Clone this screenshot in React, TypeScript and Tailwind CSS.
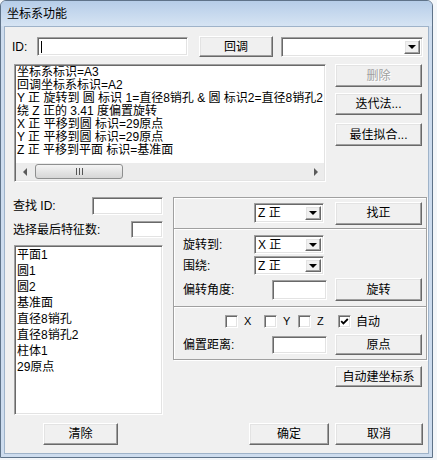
import React from 'react'

// classic 3D borders
const raised =
  'bg-[#f0f0f0] border border-t-white border-l-white border-r-[#696969] border-b-[#696969] shadow-[inset_-1px_-1px_0_#a0a0a0,inset_1px_1px_0_#e3e3e3]'
const sunken =
  'bg-white border border-t-[#a0a0a0] border-l-[#a0a0a0] border-r-white border-b-white shadow-[inset_1px_1px_0_#696969,inset_-1px_-1px_0_#e3e3e3]'

function Button({ className = '', disabled = false, children }: { className?: string; disabled?: boolean; children: React.ReactNode }) {
  return (
    <button
      type="button"
      className={`${raised} flex items-center justify-center text-[12px] leading-none shrink-0 ${
        disabled ? 'text-[#a0a0a0] [text-shadow:1px_1px_0_#ffffff]' : 'text-black'
      } ${className}`}
    >
      {children}
    </button>
  )
}

function Field({ className = '', caret = false }: { className?: string; caret?: boolean }) {
  return (
    <div className={`${sunken} shrink-0 flex items-start ${className}`}>
      {caret && <div className="ml-[3px] mt-[3px] w-[1px] h-[12px] bg-black" />}
    </div>
  )
}

function Combo({ className = '', value = '' }: { className?: string; value?: string }) {
  return (
    <div className={`${sunken} shrink-0 flex p-[2px] ${className}`}>
      <div className="flex-1 flex items-center pl-[1px] text-[12px] leading-none overflow-hidden whitespace-nowrap">{value}</div>
      <div className={`${raised} w-[16px] flex items-center justify-center`}>
        <div className="w-0 h-0 border-x-[4px] border-x-transparent border-t-[4px] border-t-black" />
      </div>
    </div>
  )
}

function Check({ checked = false, label, className = '' }: { checked?: boolean; label: string; className?: string }) {
  return (
    <div className={`flex items-center shrink-0 ${className}`}>
      <div className={`${sunken} w-[13px] h-[13px] flex items-center justify-center`}>
        {checked && (
          <svg width="9" height="9" viewBox="0 0 9 9">
            <path d="M1.2 4.2 L3.4 6.4 L7.8 2" fill="none" stroke="black" strokeWidth="1.8" />
          </svg>
        )}
      </div>
      <span className="ml-[6px] text-[11px] leading-none">{label}</span>
    </div>
  )
}

const logLines = [
  '坐标系标识=A3',
  '回调坐标系标识=A2',
  'Y 正 旋转到 圆 标识 1=直径8销孔 & 圆 标识2=直径8销孔2',
  '绕 Z 正的 3.41 度偏置旋转',
  'X 正 平移到圆 标识=29原点',
  'Y 正 平移到圆 标识=29原点',
  'Z 正 平移到平面 标识=基准面',
]

const features = ['平面1', '圆1', '圆2', '基准面', '直径8销孔', '直径8销孔2', '柱体1', '29原点']

export default function App() {
  return (
    <div className="w-[437px] h-[460px] bg-[#f3f6f9] text-black font-['Liberation_Sans','Noto_Sans_CJK_SC',sans-serif]">
      <div className="w-[433px] h-[458px] border border-[#5f7389] rounded-t-[6px] bg-[#cddcee] flex flex-col px-[3px] pb-[3px] overflow-hidden">
        {/* Title bar */}
        <div className="h-[25px] -mx-[3px] px-[6px] flex items-center bg-gradient-to-b from-[#b6cde8] to-[#d6e4f3] text-[12px] leading-none">
          坐标系功能
        </div>

        {/* Client area */}
        <div className="flex-1 bg-[#f0f0f0] border border-[#9fb3c9] flex flex-col">
          {/* ID row */}
          <div className="mt-[9px] flex items-center h-[21px]">
            <span className="ml-[7px] w-[25px] text-[12px] leading-none">ID:</span>
            <Field className="w-[151px] h-[19px]" caret />
            <Button className="ml-[11px] w-[74px] h-[21px]">回调</Button>
            <Combo className="ml-[8px] w-[142px] h-[20px]" />
          </div>

          {/* Log list + side buttons */}
          <div className="mt-[7px] flex items-start">
            <div className={`${sunken} ml-[9px] w-[312px] h-[118px] p-[1px] flex flex-col`}>
              <div className="flex-1 overflow-hidden pl-[1px] text-[12px] leading-[13px] whitespace-nowrap">
                {logLines.map((l, i) => (
                  <div key={i}>{l}</div>
                ))}
              </div>
              <div className="h-[17px] flex items-center bg-[#ececec]">
                <div className="w-[17px] h-full flex items-center justify-center">
                  <div className="w-0 h-0 border-y-[4px] border-y-transparent border-r-[4px] border-r-[#5a5a5a]" />
                </div>
                <div className="ml-[2px] w-[88px] h-[15px] rounded-[3px] border border-[#8e8f8f] bg-gradient-to-b from-[#f4f4f4] to-[#d6d6d6] flex items-center justify-center gap-[2px]">
                  <div className="w-[1px] h-[7px] bg-[#555]" />
                  <div className="w-[1px] h-[7px] bg-[#555]" />
                  <div className="w-[1px] h-[7px] bg-[#555]" />
                </div>
                <div className="flex-1" />
                <div className="w-[17px] h-full flex items-center justify-center">
                  <div className="w-0 h-0 border-y-[4px] border-y-transparent border-l-[4px] border-l-[#5a5a5a]" />
                </div>
              </div>
            </div>
            <div className="ml-[9px] w-[87px] flex flex-col">
              <Button disabled className="w-[87px] h-[23px]">删除</Button>
              <Button className="mt-[6px] w-[87px] h-[22px]">迭代法...</Button>
              <Button className="mt-[8px] w-[87px] h-[23px]">最佳拟合...</Button>
            </div>
          </div>

          {/* Lower section */}
          <div className="mt-[15px] flex items-start">
            {/* Left column */}
            <div className="ml-[8px] w-[150px] flex flex-col">
              <div className="h-[18px] flex items-center justify-between">
                <span className="text-[12px] leading-none">查找 ID:</span>
                <Field className="w-[71px] h-[18px]" />
              </div>
              <div className="mt-[6px] h-[17px] flex items-center justify-between">
                <span className="text-[12px] leading-none">选择最后特征数:</span>
                <Field className="w-[32px] h-[17px]" />
              </div>
              <div className={`${sunken} mt-[7px] ml-[1px] w-[149px] h-[170px] p-[1px] overflow-hidden`}>
                <div className="pl-[1px] text-[12px] leading-[16px] whitespace-nowrap">
                  {features.map((f) => (
                    <div key={f}>{f}</div>
                  ))}
                </div>
              </div>
            </div>

            {/* Right column */}
            <div className="ml-[10px] w-[254px] flex flex-col">
              <div className="w-[254px] h-[163px] border border-[#a0a0a0] shadow-[inset_1px_1px_0_#ffffff,1px_1px_0_#ffffff] flex flex-col">
                {/* Align */}
                <div className="h-[30px] flex items-center pl-[80px]">
                  <Combo className="w-[70px] h-[20px]" value="Z 正" />
                  <Button className="ml-[11px] w-[87px] h-[23px]">找正</Button>
                </div>

                {/* Rotate */}
                <div className="h-[78px] border-t border-[#a0a0a0] shadow-[inset_0_1px_0_#ffffff] flex flex-col">
                  <div className="mt-[6px] h-[19px] flex items-center">
                    <span className="w-[80px] pl-[9px] text-[12px] leading-none">旋转到:</span>
                    <Combo className="w-[70px] h-[19px]" value="X 正" />
                  </div>
                  <div className="mt-[2px] h-[19px] flex items-center">
                    <span className="w-[80px] pl-[9px] text-[12px] leading-none">围绕:</span>
                    <Combo className="w-[70px] h-[19px]" value="Z 正" />
                  </div>
                  <div className="mt-[3px] h-[23px] flex items-center">
                    <span className="w-[98px] pl-[9px] text-[12px] leading-none">偏转角度:</span>
                    <Field className="w-[55px] h-[20px]" />
                    <Button className="ml-[8px] w-[87px] h-[23px]">旋转</Button>
                  </div>
                </div>

                {/* Translate */}
                <div className="flex-1 border-t border-[#a0a0a0] shadow-[inset_0_1px_0_#ffffff] flex flex-col">
                  <div className="mt-[8px] h-[13px] flex items-center pl-[51px]">
                    <Check label="X" className="w-[39px]" />
                    <Check label="Y" className="w-[34px]" />
                    <Check label="Z" className="w-[40px]" />
                    <Check label="自动" checked className="[&>span]:text-[12px] [&>span]:ml-[5px]" />
                  </div>
                  <div className="mt-[6px] h-[21px] flex items-center">
                    <span className="w-[98px] pl-[9px] text-[12px] leading-none">偏置距离:</span>
                    <Field className="w-[55px] h-[18px]" />
                    <Button className="ml-[8px] w-[87px] h-[21px]">原点</Button>
                  </div>
                </div>
              </div>
              <Button className="mt-[6px] ml-[162px] w-[87px] h-[21px]">自动建坐标系</Button>
            </div>
          </div>

          {/* Bottom buttons */}
          <div className="mt-[8px] flex h-[22px]">
            <Button className="ml-[38px] w-[75px] h-[22px]">清除</Button>
            <Button className="ml-[131px] w-[80px] h-[22px]">确定</Button>
            <Button className="ml-[6px] w-[88px] h-[22px]">取消</Button>
          </div>
        </div>
      </div>
    </div>
  )
}
